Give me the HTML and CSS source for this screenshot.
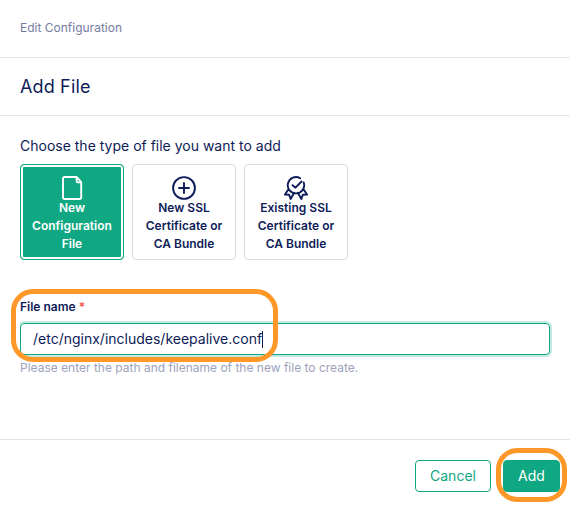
FILE: index.html
```html
<!DOCTYPE html>
<html lang="en">
<head>
<meta charset="utf-8">
<title>Add File</title>
<link rel="stylesheet" href="styles.css">
</head>
<body>
<div class="page">
  <header class="crumb"><span>Edit Configuration</span></header>
  <div class="title"><h1>Add File</h1></div>
  <main class="content">
    <p class="prompt">Choose the type of file you want to add</p>
    <div class="choices">
      <div class="choice selected">
        <svg class="icon" viewBox="0 0 24 24"><path d="M16.800 1H4.800Q3 1 3 2.800v18.400Q3 23 4.800 23h14.600q1.800 0 1.800-1.800V6.200zM16.600 1.500v3.700q0 1.200 1.200 1.200H21"/></svg>
        <span>New<br>Configuration<br>File</span>
      </div>
      <div class="choice">
        <svg class="icon" viewBox="0 0 24 24"><circle cx="12" cy="12" r="10.900"/><path d="M12 7v10M7 12h10"/></svg>
        <span>New SSL<br>Certificate or<br>CA Bundle</span>
      </div>
      <div class="choice">
        <svg class="icon" viewBox="0 0 24 24"><path d="M16.200 2.200A8.200 8.200 0 1 0 19.700 6.500M8.500 9.200l3 2.500L17.500 5.500M4.300 13.500L1 18.600l4.200.2L6.600 23l3.600-6.300M19.700 13.500l3.300 5.100-4.200.2L17.400 23l-3.600-6.300"/></svg>
        <span>Existing SSL<br>Certificate or<br>CA Bundle</span>
      </div>
    </div>
    <div class="field">
      <div class="label">File name <span class="required">*</span></div>
      <div class="input"><span>/etc/nginx/includes/keepalive.conf</span><i class="caret"></i></div>
      <p class="help">Please enter the path and filename of the new file to create.</p>
      <div class="mark mark-field"></div>
    </div>
  </main>
  <footer class="actions">
    <button class="btn">Cancel</button>
    <div class="add"><button class="btn primary">Add</button><div class="mark mark-add"></div></div>
  </footer>
</div>
</body>
</html>
```
FILE: styles.css
```css
* { box-sizing: border-box; }
body {
  margin: 0;
  background: #fff;
  color: #0e1c58;
  font-family: Inter, "Liberation Sans", sans-serif;
}
h1, p { margin: 0; font-weight: 400; }
.page { width: 570px; height: 507px; overflow: hidden; }
.crumb {
  height: 58px;
  padding: 19px 20px 0;
  border-bottom: 1px solid #e4e4ee;
  color: #747c9f;
  font-size: 12px;
  line-height: 18px;
}
.title {
  height: 58px;
  padding: 15px 20px 0;
  border-bottom: 1px solid #e4e4ee;
}
.title h1 { font-size: 18px; line-height: 28px; letter-spacing: 0.15px; }
.content { height: 323px; padding: 20px 20px 0; }
.prompt { font-size: 14px; line-height: 20px; }
.choices { display: flex; gap: 8px; margin-top: 8px; }
.choice {
  width: 104px;
  height: 96px;
  padding: 11px 0 0;
  border: 1px solid #d6d8e4;
  border-radius: 4px;
  display: flex;
  flex-direction: column;
  align-items: center;
  text-align: center;
  font-size: 12px;
  line-height: 18px;
  font-weight: 600;
}
.choice span { margin-top: -1px; }
.selected {
  background: #0fa882;
  border-color: #0fa882;
  box-shadow: inset 0 0 0 2px #fff;
  color: #fff;
}
.icon {
  width: 24px;
  height: 24px;
  fill: none;
  stroke: currentColor;
  stroke-width: 1.9;
  stroke-linecap: round;
  stroke-linejoin: round;
  flex: none;
}
.field { position: relative; margin-top: 38px; }
.label { font-size: 12px; line-height: 18px; font-weight: 600; }
.required { color: #f4523f; }
.input {
  display: flex;
  align-items: center;
  height: 32px;
  margin-top: 7px;
  padding-left: 12px;
  border: 1px solid #0fa882;
  border-radius: 4px;
  box-shadow: 0 0 0 2px #c3e9e0;
  clip-path: inset(-2px -2px -2px 0);
  font-size: 14px;
  line-height: 20px;
}
.caret { width: 1px; height: 17px; background: #0e1c58; }
.help { margin-top: 4px; color: #9da2bb; font-size: 12px; line-height: 18px; }
.mark { position: absolute; border: 5px solid #ff9828; }
.mark-field { left: -9px; top: -9px; width: 267px; height: 73px; border-radius: 22px; }
.actions {
  display: flex;
  justify-content: flex-end;
  gap: 12px;
  height: 68px;
  padding: 20px 10px 0;
  border-top: 1px solid #e4e4ee;
}
.btn {
  display: block;
  width: 76px;
  height: 32px;
  padding: 0;
  border: 1px solid #0fa882;
  border-radius: 4px;
  background: #fff;
  color: #0fa882;
  font: 14px/20px Inter, "Liberation Sans", sans-serif;
}
.primary { width: 57px; background: #0fa882; color: #fff; }
.add { position: relative; }
.mark-add { left: -7px; top: -12px; width: 71px; height: 54px; border-radius: 21px; }
```
